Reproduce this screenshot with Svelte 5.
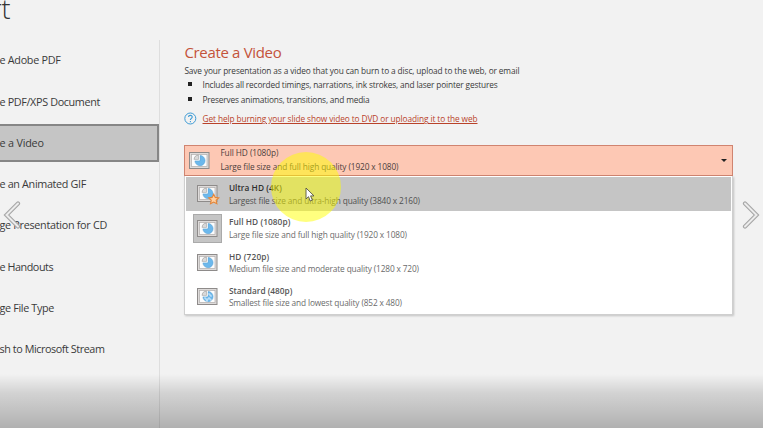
<script>
  const formats = [
    { text: 'e Adobe PDF', w: 61 },
    { text: 'e PDF/XPS Document', w: 100.5 },
    { text: 'e a Video', w: 44.3, active: true },
    { text: 'e an Animated GIF', w: 86.5 },
    { text: 'ge Presentation for CD', w: 107.5 },
    { text: 'e Handouts', w: 53.7 },
    { text: 'ge File Type', w: 54.5 },
    { text: 'sh to Microsoft Stream', w: 105 }
  ];

  const qualities = [
    { name: 'Ultra HD (4K)', nw: 53, desc: 'Largest file size and ultra-high quality (3840 x 2160)', dw: 191, kind: 'ultra' },
    { name: 'Full HD (1080p)', nw: 61.5, desc: 'Large file size and full high quality (1920 x 1080)', dw: 178, kind: 'full' },
    { name: 'HD (720p)', nw: 40.5, desc: 'Medium file size and moderate quality (1280 x 720)', dw: 190, kind: 'hd' },
    { name: 'Standard (480p)', nw: 63.5, desc: 'Smallest file size and lowest quality (852 x 480)', dw: 173, kind: 'sd' }
  ];

  // Tracks a label out so that it fills the given width.
  function fit(node, width) {
    const natural = node.getBoundingClientRect().width;
    node.style.letterSpacing = (width - natural) / node.textContent.length + 'px';
  }
</script>

{#snippet slide(kind)}
  <svg class="slide" width="21" height="17" viewBox="0 0 21 17">
    <rect x=".5" y=".5" width="19.5" height="16" fill="#dedbda" stroke="#8e8b8a" />
    <rect x="2.5" y="2.5" width="15.5" height="12" fill="#fcfcfc" stroke="#b0adac" stroke-width=".7" />
    <path d="M11 3.5A5.1 5.1 0 1 1 5.9 8.8H11Z" fill="#6cb8ec" stroke="#559bcd" stroke-width=".5" />
    <path d="M9.6 3.2V7.5H5.1A4.5 4.5 0 0 1 9.6 3.2Z" fill="#d9d9d9" stroke="#8f8f8f" stroke-width=".6" />
    <path d="M10.3 2.9V8.1H4.8" fill="none" stroke="#fcfcfc" stroke-width=".6" />
    {#if kind === 'sd'}
      <path d="M7 10h2v2h2v-2h2v2h2M11 6h2v2h2M9 13h2" fill="none" stroke="#e4f4ff" stroke-width=".8" />
    {/if}
    {#if kind === 'ultra'}
      <path d="M16.7 9.2l1.55 3.2 3.5.45-2.6 2.4.75 3.5-3.2-1.7-3.2 1.7.75-3.5-2.6-2.4 3.5-.45z" fill="#ffd0a0" stroke="#e38538" stroke-width="1.1" />
    {/if}
  </svg>
{/snippet}

<div class="page">
  <aside>
    <h1>rt</h1>
    <nav>
      {#each formats as f}
        <div class="row" class:active={f.active}><span use:fit={f.w}>{f.text}</span></div>
      {/each}
    </nav>
  </aside>

  <main>
    <h2><span use:fit={97}>Create a Video</span></h2>
    <p class="intro"><span use:fit={335}>Save your presentation as a video that you can burn to a disc, upload to the web, or email</span></p>
    <p class="point"><i></i><span use:fit={295}>Includes all recorded timings, narrations, ink strokes, and laser pointer gestures</span></p>
    <p class="point"><i></i><span use:fit={167}>Preserves animations, transitions, and media</span></p>
    <p class="help">
      <svg width="13" height="13" viewBox="0 0 13 13" fill="none" stroke="#3d9bd5">
        <circle cx="6.3" cy="6.5" r="5.5" stroke-width="1" />
        <path d="M4.5 5.1C4.5 2.8 8.2 2.9 8.2 4.9c0 1.4-1.8 1.5-1.8 3.1M6.4 9.1v1.1" stroke-width="1.1" />
      </svg>
      <a href="#help" use:fit={275}>Get help burning your slide show video to DVD or uploading it to the web</a>
    </p>

    <div class="combo">
      {@render slide('full')}
      <div class="labels">
        <div><span use:fit={58}>Full HD (1080p)</span></div>
        <div><span use:fit={178}>Large file size and full high quality (1920 x 1080)</span></div>
      </div>
      <b class="caret"></b>
    </div>
    <div class="menu">
      {#each qualities as q, i}
        <div class="option" class:hover={i === 0} class:chosen={i === 1}>
          <div class="thumb">{@render slide(q.kind)}</div>
          <div class="labels">
            <div class="name"><span use:fit={q.nw}>{q.name}</span></div>
            <div><span use:fit={q.dw}>{q.desc}</span></div>
          </div>
        </div>
      {/each}
    </div>
  </main>

  <div class="halo"></div>
  <svg class="pointer" width="10" height="16" viewBox="0 0 10 16">
    <path d="M1 1v11l2.5-2.3 1.7 4.3 2.2-.9-1.8-4.2H9z" fill="#fff" stroke="#55553e" stroke-width=".9" />
  </svg>
  <svg class="arrow prev" width="18" height="28" viewBox="0 0 18 28">
    <path d="M15 2.5L3.5 14 15 25.5" /><path class="core" d="M15 2.5L3.5 14 15 25.5" />
  </svg>
  <svg class="arrow next" width="18" height="28" viewBox="0 0 18 28">
    <path d="M3 2.5L14.5 14 3 25.5" /><path class="core" d="M3 2.5L14.5 14 3 25.5" />
  </svg>
  <div class="shade"></div>
</div>

<style>
  .page {
    position: relative;
    display: flex;
    width: 763px;
    height: 428px;
    overflow: hidden;
    background: #f2f2f2;
    font-family: 'Open Sans', 'Noto Sans', sans-serif;
    font-size: 8.3px;
    color: #3a3a3a;
  }
  h1, h2, p { margin: 0; font-weight: 400; }
  span, a { white-space: pre; }
  span { display: inline-block; }
  aside { width: 160px; flex: none; }
  h1 {
    height: 40px;
    margin-left: -9px;
    font-size: 27px;
    line-height: 18px;
    font-weight: 300;
    color: #333;
  }
  nav {
    height: 388px;
    padding-top: 1px;
    box-sizing: border-box;
    border-right: 1px solid #dedede;
  }
  .row {
    display: flex;
    align-items: center;
    height: 38.5px;
    margin-bottom: 2.8px;
    font-size: 10.8px;
    line-height: 16px;
    box-sizing: border-box;
  }
  .row span { margin-left: -.5px; }
  .row.active {
    background: #c5c5c5;
    border: 2px solid #868686;
    border-left: 0;
  }
  main { width: 549px; margin-left: 24px; padding-top: 41px; }
  h2 { height: 22px; font-size: 15px; line-height: 22px; color: #c4533a; }
  h2 span, .intro span { margin-left: .4px; }
  .intro { height: 15px; line-height: 15px; }
  .point { display: flex; align-items: center; height: 14.4px; line-height: 14px; }
  .point i { width: 4px; height: 4px; margin: 0 10.5px 2px 4px; background: #222; }
  .help { display: flex; align-items: center; height: 13px; margin-top: 5px; line-height: 13px; }
  .help a { margin-left: 5.5px; padding-top: 1px; color: #b9422a; text-underline-offset: 1px; text-decoration-thickness: 1px; }
  .combo {
    display: flex;
    align-items: center;
    box-sizing: border-box;
    height: 31px;
    margin-top: 20px;
    padding: 0 5px 0 4px;
    background: #fdc8b4;
    border: 1px solid #d08470;
  }
  .combo .labels { flex: 1; margin-left: 10.4px; line-height: 14px; }
  .combo .labels span { color: #4d403c; }
  .caret { border: 3px solid transparent; border-top: 3px solid #222; border-bottom: 0; }
  .menu {
    box-sizing: border-box;
    height: 139px;
    padding: 1px;
    background: #fff;
    border: 1px solid #cfcfcf;
    border-top: 0;
    box-shadow: 1px 1px 2px #0003;
  }
  .option { display: flex; align-items: center; height: 34.2px; color: #6b6b6b; }
  .option.hover { background: #c5c5c5; color: #505050; }
  .thumb {
    display: flex;
    align-items: center;
    justify-content: center;
    box-sizing: border-box;
    width: 29px;
    height: 29px;
    margin: 0 7.4px 0 6.5px;
  }
  .chosen .thumb { background: #c5c5c5; border: 1px solid #aaa; }
  .slide { flex: none; display: block; overflow: visible; }
  .option .labels { padding-top: 1.4px; line-height: 12.4px; }
  .name { font-weight: 600; color: #555; }
  .hover .name { color: #2d2d2d; }
  .halo {
    position: absolute;
    left: 270.5px;
    top: 152px;
    width: 70px;
    height: 70px;
    border-radius: 50%;
    background: rgba(255, 255, 0, .5);
  }
  .pointer { position: absolute; left: 305px; top: 187px; }
  .arrow { position: absolute; top: 201px; fill: none; stroke: #a6a6a6; stroke-width: 4.2; stroke-linecap: round; }
  .arrow .core { stroke: #ececec; stroke-width: 2; }
  .prev { left: 2.5px; }
  .next { left: 741.5px; }
  .shade {
    position: absolute;
    inset: 374px 0 0;
    background: linear-gradient(rgba(0, 0, 0, 0), rgba(0, 0, 0, .13) 35%, rgba(0, 0, 0, .27));
  }
</style>
